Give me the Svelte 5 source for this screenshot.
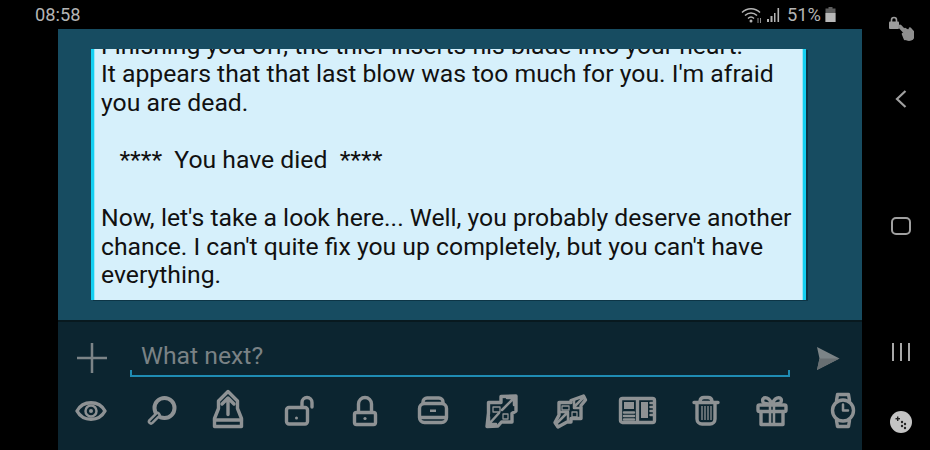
<script>
  const story = `Finishing you off, the thief inserts his blade into your heart.
It appears that that last blow was too much for you. I'm afraid you are dead.

   ****  You have died  ****

Now, let's take a look here... Well, you probably deserve another chance. I can't quite fix you up completely, but you can't have everything.`;
</script>

<div class="screen">
  <div class="main">
    <header class="status">
      <span class="clock">08:58</span>
      <div class="indicators">
        <svg class="wifi" viewBox="0 0 22 18" width="22" height="18">
          <path d="M1 6.500C6 1.500 14 1.500 19 6.500M4 9.500C7.500 6 12.500 6 16 9.500M7 12.500C8.800 10.800 11.200 10.800 13 12.500" fill="none" stroke="#b4b4b4" stroke-width="1.500"/>
          <circle cx="10" cy="15" r="1.500" fill="#b4b4b4"/>
          <path d="M17 12v5M19.500 12v5" stroke="#8a8a8a" stroke-width="1"/>
        </svg>
        <svg class="signal" viewBox="0 0 14 14" width="14" height="14">
          <path d="M1 11h2v3H1zM4.500 8h2v6h-2zM8 5h1.500v9H8zM11.500 0h1.600v14h-1.600z" fill="#b4b4b4"/>
        </svg>
        <span class="pct">51%</span>
        <svg class="battery" viewBox="0 0 11 15" width="11" height="15">
          <path d="M3.500 0h4v1.500h3V15H.5V1.500h3z" fill="#5e5e5e"/>
          <path d="M.5 6h10v9H.5z" fill="#b8b8b8"/>
        </svg>
      </div>
    </header>

    <main class="app">
      <section class="log">
        <div class="message"><p>{story}</p></div>
      </section>

      <section class="composer">
        <div class="input-row">
          <svg class="plus" viewBox="0 0 30 30" width="30" height="30">
            <path d="M15 0V30M0 15H30" stroke="#7c8487" stroke-width="2.500"/>
          </svg>
          <div class="field">What next?</div>
          <svg class="send" viewBox="0 0 24 24" width="24" height="24">
            <path d="M1 1L23.500 12.500L1 24L3.500 12.500Z" fill="#7c8487"/>
            <path d="M3.500 12.500H23.500L1 24Z" fill="#686f72"/>
          </svg>
        </div>

        <div class="tools">
          <button aria-label="look"><svg viewBox="0 0 44 44">
            <path d="M8 22C14 11 30 11 36 22C30 33 14 33 8 22Z"/>
            <circle cx="22" cy="22" r="5.500" class="thin"/>
            <circle cx="22" cy="22" r="2" class="fill"/>
          </svg></button>
          <button aria-label="search"><svg viewBox="-2 0 44 44">
            <circle cx="24.500" cy="19" r="10" class="heavy"/>
            <path d="M17.500 26L11 32.500" class="grip"/>
            <path d="M17.500 26L11 32.500" class="slit"/>
          </svg></button>
          <button aria-label="take"><svg viewBox="0 0 44 44">
            <path d="M8.500 37.500H35.500V29.500L31.500 19.500V12L22 2.500L12.500 12V19.500L8.500 29.500Z"/>
            <path d="M8.500 31H35.500"/>
            <path d="M22 25.500V9M16 15L22 9L28 15"/>
          </svg></button>
          <button aria-label="unlock"><svg viewBox="-1 0 44 44">
            <rect x="11.500" y="18.500" width="21" height="16.500" rx="2.500"/>
            <path d="M27 18V13.500a5 5 0 0 1 10 0V18"/>
            <circle cx="21.500" cy="29" r="1.500" class="fill"/>
          </svg></button>
          <button aria-label="lock"><svg viewBox="0 0 44 44">
            <rect x="11.500" y="23.500" width="21" height="12" rx="2"/>
            <path d="M15.500 23V15a6.500 6.500 0 0 1 13 0V23"/>
            <circle cx="22" cy="29.500" r="1.600" class="fill"/>
          </svg></button>
          <button aria-label="case"><svg viewBox="0 0 44 44">
            <path d="M12 14V13a4 4 0 0 1 4-4H28a4 4 0 0 1 4 4V14"/>
            <rect x="8.500" y="14.500" width="27" height="19" rx="5"/>
            <path d="M9 28.500H35"/>
            <rect x="19" y="20.500" width="6" height="2.500" class="fill"/>
          </svg></button>
          <button aria-label="expand"><svg viewBox="1 0 44 44">
            <path d="M9.500 13.500H22V7.500L37 7V22L33 24.500V33H22.500L19 37L8 37.500L9.500 24Z"/>
            <path d="M23 21L35 9M28 9H35V16" class="thin"/>
            <path d="M20 24L10 35M10 28V35H17" class="thin"/>
            <path d="M14 18H21V23H14ZM24 25H29V30H24Z" class="hair"/>
          </svg></button>
          <button aria-label="compress"><svg viewBox="1 0 44 44">
            <path d="M12 13.500H24V11.500L36.500 7L38.500 11L34 16.500V29.500H24V33H20L11 38L8 33.500L12 26Z"/>
            <path d="M37 8L27 18M27 11V19H34" class="thin"/>
            <path d="M9 35L21 23M12 23H21V31" class="thin"/>
            <path d="M15 17H22V21H15ZM25 23H30V28H25Z" class="hair"/>
          </svg></button>
          <button aria-label="book"><svg viewBox="1 0 44 44">
            <rect x="5.500" y="9.500" width="34" height="24" rx="2"/>
            <path d="M22.500 10V33"/>
            <rect x="9" y="13" width="10" height="7" class="fill"/>
            <path d="M9 23.500H19M9 27H19M9 30.500H19" class="thin"/>
            <rect x="26" y="13" width="7" height="16" class="fill"/>
            <path d="M35.500 14H38M35.500 18H38M35.500 22H38M35.500 26H38" class="thin"/>
          </svg></button>
          <button aria-label="trash"><svg viewBox="1 0 44 44">
            <path d="M10 13.500H34M16 12a4 4 0 0 1 4-3.500H24a4 4 0 0 1 4 3.500"/>
            <path d="M13 14V30a5 5 0 0 0 5 5H26a5 5 0 0 0 5-5V14"/>
            <path d="M18 17V31M21 17V31M24 17V31M27 17V31" class="hair"/>
          </svg></button>
          <button aria-label="gift"><svg viewBox="3 0 44 44">
            <rect x="8" y="16" width="28" height="6.500" rx="1.500"/>
            <path d="M11 22.500V35.500H33V22.500"/>
            <path d="M20 16V35M24 16V35" class="thin"/>
            <path d="M22 15C18 6 11 8 13 13C14 15 18 15 22 15C26 15 30 15 31 13C33 8 26 6 22 15Z"/>
          </svg></button>
          <button aria-label="wear"><svg viewBox="0 0 44 44">
            <path d="M15.500 11.500L16.500 5.500H27.500L28.500 11.500"/>
            <path d="M15.500 31.500L16.500 37.500H27.500L28.500 31.500"/>
            <circle cx="22" cy="21.500" r="10.500"/>
            <path d="M22 15.500V21.500H27" class="thin"/>
          </svg></button>
        </div>
      </section>
    </main>
  </div>

  <nav class="rail">
    <div class="slot">
      <svg viewBox="0 0 26 26" width="26" height="26">
        <rect x="1" y="6.500" width="10" height="7.500" rx="1" fill="#9c9c9c"/>
        <path d="M3.500 7V5a2.500 2.500 0 0 1 5 0V7" fill="none" stroke="#9c9c9c" stroke-width="1.600"/>
        <path d="M12 11.500L18 18" fill="none" stroke="#8f8f8f" stroke-width="4" stroke-linecap="round"/>
        <circle cx="21" cy="20" r="6" fill="#8f8f8f"/>
        <path d="M17 14L21 17M22 13.500L25 17M15 19L17 24" stroke="#8f8f8f" stroke-width="2.500" stroke-linecap="round"/>
      </svg>
    </div>
    <div class="slot">
      <svg viewBox="0 0 14 20" width="14" height="20">
        <path d="M11.500 2L3 10L11.500 18" fill="none" stroke="#a0a0a0" stroke-width="2.200"/>
      </svg>
    </div>
    <div class="slot square"></div>
    <div class="slot">
      <svg viewBox="0 0 20 18" width="20" height="18">
        <path d="M2 0V18M10 0V18M18 0V18" stroke="#a8a8a8" stroke-width="2"/>
      </svg>
    </div>
    <div class="slot">
      <svg viewBox="0 0 22 22" width="22" height="22">
        <circle cx="11" cy="11" r="11" fill="#c4c4c4"/>
        <g fill="#222">
          <rect x="5.500" y="7" width="4.500" height="1.400" />
          <rect x="7" y="5.500" width="1.400" height="4.500"/>
          <circle cx="12" cy="11" r="1.200"/>
          <circle cx="15" cy="13" r="1.200"/>
          <circle cx="12" cy="15" r="1.200"/>
          <circle cx="15" cy="17" r="1.200"/>
        </g>
      </svg>
    </div>
  </nav>
</div>

<style>
  :global(body) {
    margin: 0;
    background: #000;
  }
  .screen {
    display: flex;
    width: 930px;
    height: 450px;
    overflow: hidden;
    background: #000;
    font-family: Roboto, "Liberation Sans", sans-serif;
  }
  .main {
    width: 862px;
    display: flex;
    flex-direction: column;
  }
  .status {
    height: 29px;
    flex: none;
    display: flex;
    align-items: center;
    justify-content: space-between;
    padding: 0 26px 0 35px;
    color: #b4b4b4;
    font-size: 18.300px;
  }
  .wifi { margin-right: 3px; }
  .signal { margin-right: 7px; }
  .pct { margin-right: 4px; }
  .indicators {
    display: flex;
    align-items: center;
  }
  .app {
    flex: 1;
    margin-left: 58px;
    display: flex;
    flex-direction: column;
    min-height: 0;
    background: #0c2530;
  }
  .log {
    height: 293px;
    flex: none;
    box-sizing: border-box;
    padding: 20px 56px 20px 33px;
    background: #174c61;
    border-bottom: 2px solid #08191f;
  }
  .message {
    height: 100%;
    box-sizing: border-box;
    overflow: hidden;
    display: flex;
    flex-direction: column;
    justify-content: flex-end;
    padding: 0 10px 10px 7px;
    background: #d6f0fb;
    border-left: 3px solid #14d0f2;
    border-right: 3px solid #14d0f2;
    box-shadow: 2px 1px 0 #0d3546, inset 1px 0 0 #9ae8f8, inset -1px 0 0 #9ae8f8;
  }
  .message p {
    margin: 0;
    white-space: pre-wrap;
    color: #111;
    font-size: 24.750px;
    line-height: 28.700px;
  }
  .composer {
    flex: 1;
    display: flex;
    flex-direction: column;
  }
  .input-row {
    height: 67px;
    flex: none;
    display: flex;
    align-items: center;
    padding: 4px 22px 0 19px;
    box-sizing: border-box;
  }
  .plus {
    flex: none;
    margin-right: 23px;
  }
  .field {
    position: relative;
    flex: 1;
    box-sizing: border-box;
    height: 38px;
    margin-top: 1px;
    padding: 2px 0 0 11px;
    line-height: 30px;
    font-size: 24.750px;
    color: #7a8285;
    border-bottom: 2px solid #1f8cb3;
  }
  .field::before,
  .field::after {
    content: "";
    position: absolute;
    bottom: 0;
    width: 2px;
    height: 5px;
    background: #1f8cb3;
  }
  .field::before { left: 0; }
  .field::after { right: 0; }
  .send {
    flex: none;
    margin-left: 26px;
  }
  .tools {
    display: flex;
    margin-left: -1px;
  }
  .tools button {
    flex: none;
    width: 68.400px;
    height: 44px;
    padding: 0;
    border: 0;
    background: none;
    display: flex;
    justify-content: center;
  }
  .tools svg {
    width: 44px;
    height: 44px;
    flex: none;
    overflow: visible;
    fill: none;
    stroke: #8e9294;
    stroke-width: 3.400;
    stroke-linejoin: round;
    stroke-linecap: round;
  }
  .tools .thin { stroke-width: 2.500; }
  .tools .hair { stroke-width: 1.300; stroke-linecap: butt; }
  .tools .heavy { stroke-width: 4; }
  .tools .grip { stroke-width: 6.500; }
  .tools .slit { stroke: #0c2530; stroke-width: 1.500; }
  .tools .fill { fill: #8e9294; stroke: none; }
  .rail {
    width: 68px;
    box-sizing: border-box;
    padding-left: 10px;
    display: grid;
    grid-template-rows: 56px 86px 168px 84px 56px;
  }
  .slot {
    display: flex;
    align-items: center;
    justify-content: center;
  }
  .square::before {
    content: "";
    width: 16px;
    height: 14px;
    border: 2.200px solid #a0a0a0;
    border-radius: 5px;
  }
</style>
